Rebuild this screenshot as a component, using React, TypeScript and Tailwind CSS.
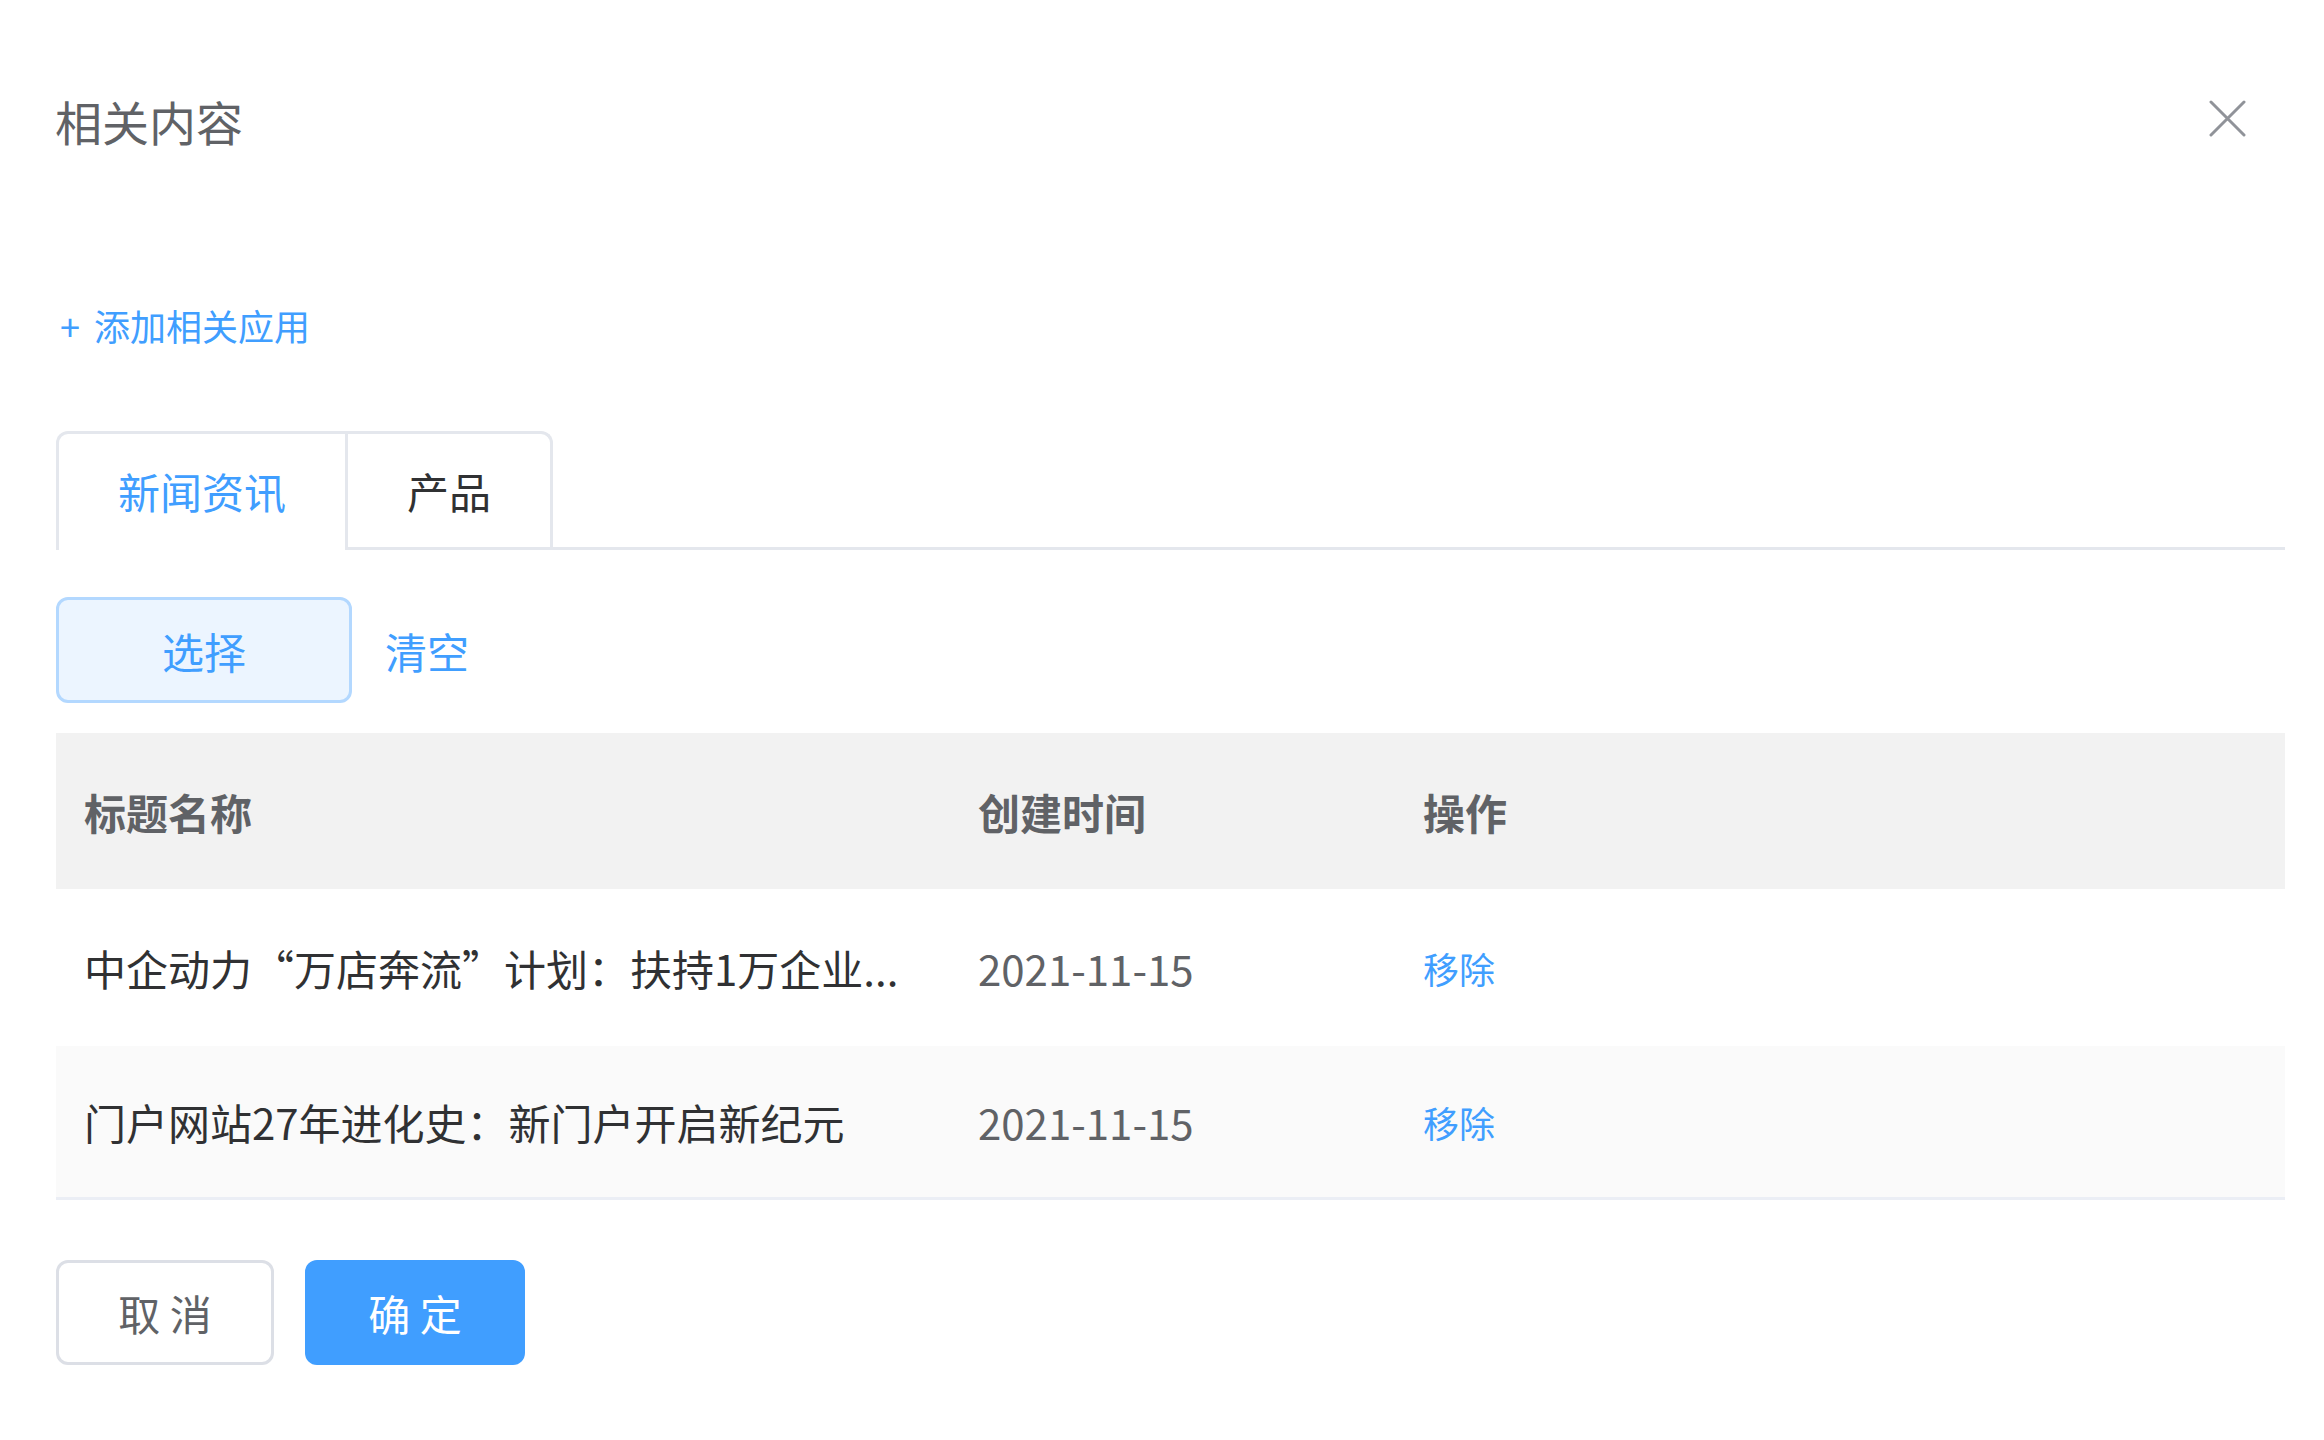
import React from 'react';

const rows = [
  { title: '中企动力“万店奔流”计划：扶持1万企业...', date: '2021-11-15', bg: 'bg-white' },
  { title: '门户网站27年进化史：新门户开启新纪元', date: '2021-11-15', bg: 'bg-[#fafafa]' },
];

export default function App() {
  return (
    <div
      className="w-[2324px] h-[1440px] bg-white overflow-hidden"
      style={{ fontFamily: '"Noto Sans CJK SC", "Noto Sans", sans-serif' }}
    >
      {/* header */}
      <div className="h-[240px] flex items-center justify-between pl-[55px] pr-[78px]">
        <span className="text-[47px] leading-none text-[#606266]">相关内容</span>
        <svg width="37" height="37" viewBox="0 0 37 37" className="text-[#909399] -mt-[4px]">
          <path d="M2 2 L35 35 M35 2 L2 35" stroke="currentColor" strokeWidth="3" strokeLinecap="round" />
        </svg>
      </div>

      <div className="pl-[56px] pr-[39px]">
        <div className="h-[170px] flex items-center pl-[4px] gap-[14px] text-[36px] leading-none text-[#409eff]">
          <span>+</span>
          <span>添加相关应用</span>
        </div>

        {/* tabs */}
        <div className="mt-[21px] flex border-b-[3px] border-[#e4e7ed]">
          <div className="flex border-[3px] border-b-0 border-[#e4e7ed] rounded-t-[12px] -mb-[3px]">
            <div className="h-[116px] px-[59px] flex items-center text-[42px] text-[#409eff] border-b-[3px] border-white">
              新闻资讯
            </div>
            <div className="h-[116px] px-[59px] flex items-center text-[42px] text-[#303133] border-l-[3px] border-b-[3px] border-l-[#e4e7ed] border-b-[#e4e7ed]">
              产品
            </div>
          </div>
        </div>

        {/* actions */}
        <div className="mt-[47px] flex items-center gap-[33px]">
          <button className="w-[296px] h-[106px] rounded-[12px] bg-[#ecf5ff] border-[3px] border-[#b3d8ff] text-[42px] text-[#409eff]">
            选择
          </button>
          <span className="text-[42px] text-[#409eff]">清空</span>
        </div>

        {/* table */}
        <div className="mt-[30px] border-b-[3px] border-[#ebeef5]">
          <div className="h-[156px] flex items-center bg-[#f2f2f2] text-[42px] font-bold text-[#606266]">
            <div className="w-[894px] px-[28px]">标题名称</div>
            <div className="w-[445px] px-[28px]">创建时间</div>
            <div className="px-[28px]">操作</div>
          </div>
          {rows.map((r, i) => (
            <div key={i} className={`${i === 0 ? 'h-[157px]' : 'h-[151px]'} flex items-center ${r.bg}`}>
              <div className="w-[894px] px-[28px] text-[42px] text-[#303133] whitespace-nowrap overflow-hidden">
                {r.title}
              </div>
              <div className="w-[445px] px-[28px] text-[42px] text-[#606266]">{r.date}</div>
              <div className="px-[28px] text-[36px] text-[#409eff]">移除</div>
            </div>
          ))}
        </div>

        {/* footer */}
        <div className="mt-[60px] flex gap-[31px]">
          <button className="w-[218px] h-[105px] rounded-[12px] border-[3px] border-[#dcdfe6] bg-white text-[42px] text-[#606266]">
            取 消
          </button>
          <button className="w-[220px] h-[105px] rounded-[12px] bg-[#409eff] text-[42px] text-white">
            确 定
          </button>
        </div>
      </div>
    </div>
  );
}
